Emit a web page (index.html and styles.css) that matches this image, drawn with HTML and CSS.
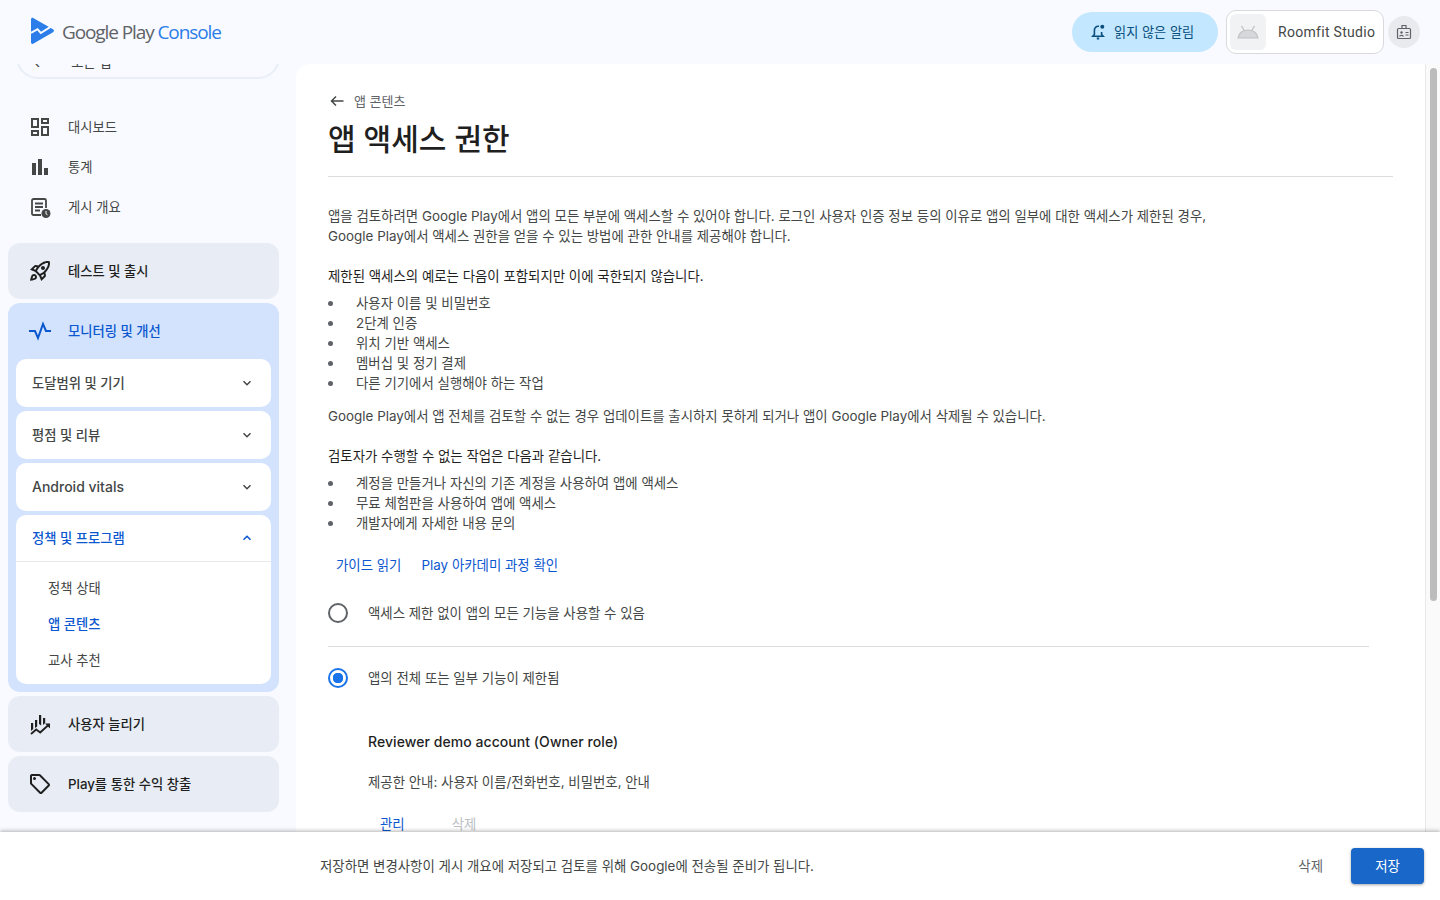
FILE: index.html
```html
<!doctype html>
<html lang="ko">
<head>
<meta charset="UTF-8">
<title>앱 액세스 권한</title>
<link rel="stylesheet" href="styles.css">
</head>
<body>
<div class="app">
  <header class="topbar">
    <div class="brand">
      <svg class="logo" width="26" height="28" viewBox="0 0 26 28"><path d="M1 2.500C1 1 2.400.4 3.600 1.200L23 12.200c1.300.8 1.300 2.200 0 3L3.600 26.600C2.400 27.400 1 26.800 1 25.300z" fill="#2b7de9"/><path d="M1 15.800l6.500-3.600 3.300 3.800 9.700-6.200" fill="none" stroke="#f8faff" stroke-width="2"/></svg>
      <span class="brand-name">Google Play <em>Console</em></span>
    </div>
    <div class="top-actions">
      <button class="notice">
        <svg width="18" height="18" viewBox="0 0 18 18" fill="none" stroke="#0a4f7d" stroke-width="1.600"><path d="M10 3.300C7.500 2.800 5.400 4.500 5.400 7.200v4.300l-1.600 1.800h10.400l-1.600-1.800V9"/><path d="M7.800 15.500h2.400" stroke-width="2"/><circle cx="13.300" cy="3.800" r="2" fill="#0a4f7d" stroke="none"/></svg>
        읽지 않은 알림
      </button>
      <div class="studio">
        <span class="studio-icon">
          <svg width="22" height="14" viewBox="0 0 22 14"><path d="M1 13c.5-4.500 4.500-8 10-8s9.500 3.500 10 8z" fill="#d5d7da" stroke="#bfc2c6" stroke-width="1.200"/><path d="M4.500 1l2.500 4M17.500 1L15 5" stroke="#bfc2c6" stroke-width="1.400"/></svg>
        </span>
        <span class="studio-name">Roomfit Studio</span>
      </div>
      <span class="round-btn">
        <svg width="16" height="16" viewBox="0 0 16 16" fill="none" stroke="#5f6368" stroke-width="1.200"><rect x="1.500" y="4.500" width="13" height="10" rx="1"/><path d="M6 4.500V1.500h4v3"/><circle cx="5.500" cy="8.500" r="1.200" fill="#5f6368" stroke="none"/><path d="M3.500 12.500c.3-1.500 3.700-1.500 4 0M9.500 8.500h3M9.500 11h3"/></svg>
      </span>
    </div>
  </header>

  <div class="workspace">
    <nav class="sidebar">
      <div class="app-pill"><span class="pill-arrow">‹</span><span>모든 앱</span></div>

      <ul class="nav-plain">
        <li class="nav-row">
          <svg width="24" height="24" viewBox="0 0 24 24" fill="#444746"><path d="M19 5v2h-4V5h4M9 5v6H5V5h4m10 8v6h-4v-6h4M9 17v2H5v-2h4M21 3h-8v6h8V3zM11 3H3v10h8V3zm10 8h-8v10h8V11zm-10 4H3v6h8v-6z"/></svg>
          대시보드
        </li>
        <li class="nav-row">
          <svg width="24" height="24" viewBox="0 0 24 24" fill="#444746"><rect x="4" y="8" width="4" height="12"/><rect x="10" y="4" width="4" height="16"/><rect x="16" y="13" width="4" height="7"/></svg>
          통계
        </li>
        <li class="nav-row">
          <svg width="24" height="24" viewBox="0 0 24 24" fill="none" stroke="#444746" stroke-width="1.800"><path d="M13 20H5.500A1.500 1.500 0 0 1 4 18.500v-13A1.500 1.500 0 0 1 5.500 4h11A1.500 1.500 0 0 1 18 5.500V13"/><path d="M7 8.500h8M7 12h8M7 15.500h5"/><circle cx="18" cy="18.500" r="4.500" fill="#444746" stroke="none"/><path d="M18 16v2.800l1.500 1" stroke="#fff" stroke-width="1"/></svg>
          게시 개요
        </li>
      </ul>

      <div class="nav-group">
        <div class="group-head">
          <svg width="24" height="24" viewBox="0 0 24 24" fill="#1f1f1f"><path d="M6,15c-0.83,0-1.58,0.34-2.12,0.88C2.7,17.06,2,22,2,22s4.94-0.7,6.12-1.88C8.66,19.58,9,18.83,9,18C9,16.34,7.66,15,6,15z M6.71,18.71c-0.28,0.28-2.17,0.76-2.17,0.76s0.47-1.88,0.76-2.170C5.470,17.110,5.720,17,6,17c0.550,0,1,0.450,1,1C7,18.280,6.890,18.530,6.710,18.710z M17.420,13.650L17.420,13.650c6.360-6.360,4.240-11.310,4.240-11.310s-4.950-2.120-11.310,4.240l-2.490-0.500C7.210,5.950,6.530,6.160,6.050,6.630L2,10.690l5,2.140L11.170,17l2.140,5l4.050-4.050c0.470-0.470,0.680-1.150,0.550-1.810L17.420,13.650z M7.410,10.830L5.500,10.010l1.970-1.970l1.440,0.290C8.340,9.160,7.830,10.030,7.410,10.830z M13.990,18.500l-0.820-1.910c0.800-0.420,1.670-0.930,2.490-1.500l0.290,1.440L13.990,18.500z M16,12.240c-1.320,1.320-3.380,2.400-4.040,2.730l-2.930-2.930c0.320-0.650,1.400-2.710,2.730-4.040c4.680-4.680,8.230-3.990,8.230-3.990S20.680,7.560,16,12.240z M15,11c1.100,0,2-0.900,2-2s-0.900-2-2-2s-2,0.900-2,2S13.900,11,15,11z"/></svg>
          테스트 및 출시
        </div>
      </div>

      <div class="nav-group open">
        <div class="group-head">
          <svg width="24" height="24" viewBox="0 0 24 24" fill="none" stroke="#0b57d0" stroke-width="2"><path d="M1 12h6l3 7 5-14 3 7h5"/></svg>
          모니터링 및 개선
        </div>
        <div class="sub-card"><div class="sub-head">도달범위 및 기기<svg class="chev" width="12" height="12" viewBox="0 0 12 12"><path d="M2.500 4.200L6 7.700l3.500-3.500"/></svg></div></div>
        <div class="sub-card"><div class="sub-head">평점 및 리뷰<svg class="chev" width="12" height="12" viewBox="0 0 12 12"><path d="M2.500 4.200L6 7.700l3.500-3.500"/></svg></div></div>
        <div class="sub-card"><div class="sub-head"><span class="sub-latin">Android vitals</span><svg class="chev" width="12" height="12" viewBox="0 0 12 12"><path d="M2.500 4.200L6 7.700l3.500-3.500"/></svg></div></div>
        <div class="sub-card">
          <div class="sub-head active">정책 및 프로그램<svg class="chev" width="12" height="12" viewBox="0 0 12 12"><path d="M2.500 7.700L6 4.200l3.500 3.500"/></svg></div>
          <ul class="sub-list">
            <li>정책 상태</li>
            <li class="current">앱 콘텐츠</li>
            <li>교사 추천</li>
          </ul>
        </div>
      </div>

      <div class="nav-group">
        <div class="group-head">
          <svg width="24" height="24" viewBox="0 0 24 24" fill="#1f1f1f"><path d="M3 11h2.200v6l-2.200 2zM7 8h2.200v6.500L7 16zM11 3h2.200v10.500L11 12zM15 6h2.200v5L15 13z"/><path d="M3 22l5.200-4.500 4 3L21 12.500" fill="none" stroke="#1f1f1f" stroke-width="1.800"/><path d="M17 11.500h5v5z"/></svg>
          사용자 늘리기
        </div>
      </div>

      <div class="nav-group">
        <div class="group-head">
          <svg width="24" height="24" viewBox="0 0 24 24" fill="#1f1f1f"><path d="M21.410 11.410l-8.830-8.830C12.210 2.210 11.700 2 11.170 2H4c-1.100 0-2 .9-2 2v7.170c0 .53.21 1.040.59 1.410l8.830 8.830c.78.78 2.050.78 2.830 0l7.170-7.170c.78-.78.78-2.040-.01-2.830zM12.830 20L4 11.170V4h7.170L20 12.830 12.830 20z"/><circle cx="6.500" cy="6.500" r="1.500"/></svg>
          Play를 통한 수익 창출
        </div>
      </div>
    </nav>

    <div class="panel">
      <main class="content">
        <a class="crumb">
          <svg width="18" height="18" viewBox="0 0 18 18" fill="none" stroke="#444746" stroke-width="1.500"><path d="M15.500 9H3.500M8 4.500L3.500 9 8 13.500"/></svg>
          앱 콘텐츠
        </a>
        <h1 class="page-title">앱 액세스 권한</h1>

        <p class="intro">앱을 검토하려면 Google Play에서 앱의 모든 부분에 액세스할 수 있어야 합니다. 로그인 사용자 인증 정보 등의 이유로 앱의 일부에 대한 액세스가 제한된 경우,<br>Google Play에서 액세스 권한을 얻을 수 있는 방법에 관한 안내를 제공해야 합니다.</p>

        <p class="lead">제한된 액세스의 예로는 다음이 포함되지만 이에 국한되지 않습니다.</p>
        <ul class="bullets">
          <li>사용자 이름 및 비밀번호</li>
          <li>2단계 인증</li>
          <li>위치 기반 액세스</li>
          <li>멤버십 및 정기 결제</li>
          <li>다른 기기에서 실행해야 하는 작업</li>
        </ul>

        <p class="warn">Google Play에서 앱 전체를 검토할 수 없는 경우 업데이트를 출시하지 못하게 되거나 앱이 Google Play에서 삭제될 수 있습니다.</p>

        <p class="lead">검토자가 수행할 수 없는 작업은 다음과 같습니다.</p>
        <ul class="bullets">
          <li>계정을 만들거나 자신의 기존 계정을 사용하여 앱에 액세스</li>
          <li>무료 체험판을 사용하여 앱에 액세스</li>
          <li>개발자에게 자세한 내용 문의</li>
        </ul>

        <div class="links">
          <a>가이드 읽기</a>
          <a>Play 아카데미 과정 확인</a>
        </div>

        <label class="radio-row"><span class="radio"></span>액세스 제한 없이 앱의 모든 기능을 사용할 수 있음</label>
        <hr class="rule">
        <label class="radio-row"><span class="radio checked"></span>앱의 전체 또는 일부 기능이 제한됨</label>

        <section class="account">
          <h2>Reviewer demo account (Owner role)</h2>
          <p>제공한 안내: 사용자 이름/전화번호, 비밀번호, 안내</p>
          <div class="account-actions">
            <a>관리</a>
            <a class="disabled">삭제</a>
          </div>
        </section>
      </main>
      <div class="scrollbar"><span class="thumb"></span></div>
    </div>
  </div>

  <footer class="savebar">
    <p>저장하면 변경사항이 게시 개요에 저장되고 검토를 위해 Google에 전송될 준비가 됩니다.</p>
    <div class="save-actions">
      <button class="btn-discard">삭제</button>
      <button class="btn-save">저장</button>
    </div>
  </footer>
</div>
</body>
</html>
```

FILE: styles.css
```css
*{box-sizing:border-box;}
html,body{margin:0;padding:0;height:100%;overflow:hidden;}
body{background:#f8faff;color:#444746;font:13.300px/20px Inter,"Noto Sans CJK KR",sans-serif;}
ul{list-style:none;margin:0;padding:0;}
p,h1,h2{margin:0;}
button{font:inherit;border:0;cursor:pointer;}

.app{display:flex;flex-direction:column;height:900px;}

/* top bar */
.topbar{display:flex;align-items:center;justify-content:space-between;height:64px;flex:none;padding:0 20px 0 30px;}
.brand{display:flex;align-items:center;gap:6px;}
.logo{display:block;margin-top:-2px;}
.brand-name{font:400 19px/24px "Open Sans",sans-serif;letter-spacing:-1.1px;color:#5f6368;}
.brand-name em{font-style:normal;color:#2b7de9;}
.top-actions{display:flex;align-items:center;}
.notice{display:flex;align-items:center;gap:7px;height:40px;width:146px;padding-left:17px;border-radius:20px;background:#c2e7ff;color:#0a4f7d;font-size:13.200px;}
.studio{display:flex;align-items:center;width:158px;height:44px;margin-left:8px;padding:3px;background:#fff;border:1px solid #d9d9de;border-radius:10px;}
.studio-icon{display:flex;align-items:center;justify-content:center;width:36px;height:36px;background:#f1f2f4;border-radius:6px;}
.studio-name{margin-left:12px;font:14px/20px Roboto,sans-serif;letter-spacing:.3px;color:#444746;white-space:nowrap;}
.round-btn{display:flex;align-items:center;justify-content:center;width:32px;height:32px;margin-left:4px;background:#e9eaee;border-radius:50%;}

/* sidebar */
.workspace{display:flex;flex:1;min-height:0;}
.sidebar{width:296px;flex:none;padding:0 17px 0 8px;overflow:hidden;}
.app-pill{display:flex;align-items:center;gap:31px;height:44px;margin:-29px -1px 28px 8px;padding:10px 0 0 16px;border:2px solid #e9eef6;border-radius:24px;background:#f8faff;}
.pill-arrow{font-size:16px;}
.nav-row{display:flex;align-items:center;gap:16px;height:40px;padding-left:20px;}
.nav-plain{margin-bottom:16px;}
.nav-group{margin-bottom:4px;background:#e8edf5;border-radius:12px;color:#1f1f1f;font-weight:500;}
.group-head{display:flex;align-items:center;gap:16px;height:56px;padding-left:20px;}
.nav-group.open{padding:0 8px 8px;background:#d3e3fd;}
.nav-group.open .group-head{margin:0 -8px;color:#0b57d0;}
.sub-card{margin-bottom:4px;background:#fff;border-radius:10px;overflow:hidden;}
.sub-card:last-child{margin-bottom:0;}
.sub-head{display:flex;align-items:center;justify-content:space-between;height:48px;padding:0 18px 0 16px;color:#444746;}
.sub-latin{font-size:14px;}
.sub-head.active{height:47px;border-bottom:1px solid #e8eaed;color:#0b57d0;}
.sub-head.active .chev{stroke:#0b57d0;}
.chev{fill:none;stroke:#444746;stroke-width:1.500;}
.sub-list{padding:8px 0 6px;font-weight:400;color:#444746;}
.sub-list li{display:flex;align-items:center;height:36px;padding-left:32px;}
.sub-list li.current{color:#0b57d0;font-weight:500;}

/* main panel */
.panel{display:flex;flex:1;min-width:0;background:#fff;border-top-left-radius:14px;overflow:hidden;}
.content{flex:1;min-width:0;padding:27px 32px 0;overflow:hidden;font-size:13.420px;}
.crumb{display:flex;align-items:center;gap:8px;height:20px;font-size:13px;color:#5f6368;}
.page-title{height:66px;padding-top:9px;margin-bottom:29px;border-bottom:1px solid #dadce0;font:500 30px/38px Inter,"Noto Sans CJK KR",sans-serif;color:#1f1f1f;}
.intro{margin-bottom:20px;}
.lead{color:#1f1f1f;margin-bottom:6px;}
.bullets{margin-bottom:13px;padding-top:1px;}
.bullets li{display:flex;align-items:center;height:20px;}
.bullets li::before{content:"";flex:none;width:5px;height:5px;margin-right:23px;border-radius:50%;background:#5f6368;}
.warn{margin-bottom:20px;}
.links{display:flex;gap:20px;margin-top:22px;padding-left:8px;}
.links a{color:#0b57d0;}
.radio-row{display:flex;align-items:center;gap:20px;height:20px;margin-top:28px;}
.radio{width:20px;height:20px;flex:none;border:2px solid #5f6368;border-radius:50%;}
.radio.checked{border-color:#1a73e8;background:radial-gradient(circle,#1a73e8 0 5px,#fff 5.500px);}
.rule{width:1041px;height:1px;margin:23px 0 0;border:0;background:#dadce0;}
.rule + .radio-row{margin-top:21px;}
.account{padding:44px 0 0 40px;}
.account h2{font:500 14px/20px Inter,"Noto Sans CJK KR",sans-serif;letter-spacing:.06px;color:#1f1f1f;}
.account p{margin-top:20px;}
.account-actions{display:flex;gap:47px;margin-top:22px;padding-left:12px;}
.account-actions a{color:#0b57d0;}
.account-actions .disabled{color:#bdc1c6;}
.scrollbar{width:15px;flex:none;padding:4px 3px 0 4px;background:#fafafa;border-left:1px solid #e8e8e8;}
.thumb{display:block;height:533px;background:#bcbcbc;border-radius:4px;}

/* save bar */
.savebar{position:relative;display:flex;align-items:center;justify-content:space-between;height:68px;flex:none;padding:0 16px 0 320px;background:#fff;box-shadow:0 -1px 4px rgba(0,0,0,.3);font-size:13.420px;}
.save-actions{display:flex;align-items:center;gap:28px;}
.btn-discard{padding:0;background:none;color:#5f6368;}
.btn-save{width:73px;height:36px;background:#1967c9;color:#fff;border-radius:4px;box-shadow:0 1px 3px rgba(0,0,0,.35);}
```
